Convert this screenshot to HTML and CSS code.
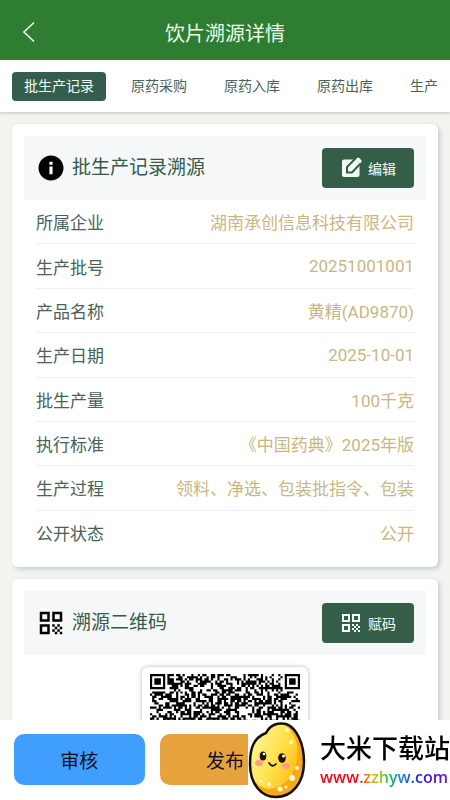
FILE: index.html
```
<!DOCTYPE html>
<html lang="zh-CN">
  <head>
    <meta charset="UTF-8" />
    <meta name="viewport" content="width=device-width, initial-scale=1.0" />

    <title>饮片溯源详情</title>

    <link rel="stylesheet" href="styles.css">
  </head>

  <body>
    <header class="topbar">
      <button class="back" aria-label="返回">
        <svg viewBox="0 0 24 24">
          <path d="M18 2.500L8 12L18 21.500" fill="none" stroke="currentColor" stroke-width="1.700" />
        </svg>
      </button>
      <h1>饮片溯源详情</h1>
    </header>

    <nav class="tabs">
      <div class="tabList">
        <a class="tab active" href="#batch">批生产记录</a>
        <a class="tab" href="#purchase">原药采购</a>
        <a class="tab" href="#in">原药入库</a>
        <a class="tab" href="#out">原药出库</a>
        <a class="tab" href="#produce">生产</a>
      </div>
    </nav>

    <main class="content">
      <section class="card" id="batch">
        <div class="cardHead">
          <svg class="headIcon" viewBox="0 0 24 24">
            <path d="M12 2C6.480 2 2 6.480 2 12s4.480 10 10 10 10-4.480 10-10S17.520 2 12 2zm1.300 15h-2.600v-6.200h2.600v6.200zm0-7.700h-2.600V6.900h2.600v2.400z" />
          </svg>
          <h2>批生产记录溯源</h2>
          <button class="btn">
            <svg viewBox="0 0 24 24">
              <rect x="3" y="3.500" width="17.500" height="17.500" rx="2" />
              <path class="pencil" d="M8 16.500v-5.500L17 2l5 5-9 9.500z" />
              <path d="M16.800 3.300l1.200-1.200q1-1 2.200 0l2 2q1.100 1.100 0 2.200l-1.200 1.200z" />
            </svg>
            编辑
          </button>
        </div>
        <dl class="info">
          <div class="row"><dt>所属企业</dt><dd>湖南承创信息科技有限公司</dd></div>
          <div class="row"><dt>生产批号</dt><dd>20251001001</dd></div>
          <div class="row"><dt>产品名称</dt><dd>黄精(AD9870)</dd></div>
          <div class="row"><dt>生产日期</dt><dd>2025-10-01</dd></div>
          <div class="row"><dt>批生产量</dt><dd>100千克</dd></div>
          <div class="row"><dt>执行标准</dt><dd>《中国药典》2025年版</dd></div>
          <div class="row"><dt>生产过程</dt><dd>领料、净选、包装批指令、包装</dd></div>
          <div class="row"><dt>公开状态</dt><dd>公开</dd></div>
        </dl>
      </section>

      <section class="card">
        <div class="cardHead">
          <svg class="headIcon" viewBox="0 0 24 24">
            <path id="qrIcon" d="M3 11h8V3H3v8zm2-6h4v4H5V5zM3 21h8v-8H3v8zm2-6h4v4H5v-4zM13 3v8h8V3h-8zm6 6h-4V5h4v4zM19 19h2v2h-2zM13 13h2v2h-2zM15 15h2v2h-2zM13 17h2v2h-2zM15 19h2v2h-2zM17 17h2v2h-2zM17 13h2v2h-2zM19 15h2v2h-2z" />
          </svg>
          <h2>溯源二维码</h2>
          <button class="btn">
            <svg viewBox="0 0 24 24"><use href="#qrIcon" /></svg>
            赋码
          </button>
        </div>
        <div class="qrBox">
          <svg class="qr" viewBox="0 0 69 69" role="img" aria-label="溯源二维码">
            <path id="qrPath" />
          </svg>
        </div>
      </section>
    </main>

    <footer class="actions">
      <button class="audit">审核</button>
      <button class="publish">发布</button>
    </footer>

    <div class="brand">
      <svg class="rice" viewBox="0 0 58 78">
        <defs>
          <linearGradient id="riceFill" x1="0" y1="0" x2="1" y2="0.600">
            <stop offset="0" stop-color="#fff8a8" />
            <stop offset="0.550" stop-color="#ffe657" />
            <stop offset="1" stop-color="#ffc51c" />
          </linearGradient>
        </defs>
        <path d="M18 12C22 4 30 1 38 3C49 7 56 23 56 41C56 62 44 76 28 76C13 76 2 63 2 43C2 28 5 17 18 12Z" fill="#f9a916" />
        <path d="M18 12C22 4 30 1 36 3C47 10 51 24 49 38C47 55 36 66 22 68C9 67 2 58 2 43C2 28 5 17 18 12Z" fill="url(#riceFill)" />
        <path d="M18 12C22 4 30 1 38 3C49 7 56 23 56 41C56 62 44 76 28 76C13 76 2 63 2 43C2 28 5 17 18 12Z" fill="none" stroke="#111" stroke-width="2.500" />
        <g fill="#fff8d0">
          <circle cx="39" cy="9" r="2" />
          <circle cx="43" cy="21" r="2" />
          <circle cx="49" cy="47" r="2" />
          <circle cx="44" cy="57" r="3" />
          <circle cx="32" cy="68" r="2.500" />
          <circle cx="21" cy="63" r="2" />
          <circle cx="13" cy="60" r="1.500" />
          <circle cx="38" cy="66" r="1.500" />
        </g>
        <ellipse cx="11" cy="42" rx="4" ry="3" fill="#ff9c8c" />
        <ellipse cx="38" cy="45" rx="4" ry="3" fill="#ff9c8c" />
        <ellipse cx="15" cy="35" rx="3.300" ry="4.500" fill="#201008" />
        <ellipse cx="34" cy="37" rx="3.800" ry="4.800" fill="#201008" />
        <circle cx="16" cy="33" r="1.300" fill="#fff" />
        <circle cx="35.500" cy="35" r="1.500" fill="#fff" />
        <path d="M21 42Q24.500 47 28 43" fill="none" stroke="#201008" stroke-width="1.800" stroke-linecap="round" />
      </svg>
      <div class="brandText">
        <strong>大米下载站</strong>
        <span class="site">www.zzhyw.com</span>
      </div>
    </div>

    <script src="script.js"></script>
  </body>
</html>
```

FILE: styles.css
```
* {
  box-sizing: border-box;
}
body {
  display: flex;
  flex-direction: column;
  height: 100vh;
  margin: 0;
  background-color: #f2f4f0;
  color: #345b47;
  font-family: Roboto, "Noto Sans CJK SC", sans-serif;
}
h1,
h2,
dl,
dd {
  margin: 0;
  font-weight: 400;
}
button {
  border: none;
  padding: 0;
  font-family: inherit;
}

.topbar {
  display: grid;
  flex: none;
  grid-template-columns: 24px 1fr 24px;
  align-items: center;
  height: 60px;
  padding: 4px 16px 0;
  background-color: #2e7d32;
  color: #e9fbe8;
}
.topbar h1 {
  font-size: 20px;
  text-align: center;
}
.back {
  height: 24px;
  background: none;
  color: inherit;
}
.back svg {
  display: block;
  width: 24px;
}

.tabs {
  flex: none;
  padding: 12px 12px 11px;
  background-color: #fff;
  box-shadow: 0 2px 2px rgba(0, 0, 0, 0.12);
}
.tabList {
  display: flex;
  gap: 13px;
  overflow: hidden;
}
.tab {
  flex: none;
  padding: 0 12px;
  border-radius: 4px;
  color: #4a6257;
  font-size: 14px;
  line-height: 29px;
  text-decoration: none;
}
.tab:last-child {
  padding-right: 0;
}
.tab.active {
  background-color: #345e4b;
  color: #f2fff8;
}

.content {
  display: flex;
  flex: 1;
  flex-direction: column;
  gap: 12px;
  min-height: 0;
  padding: 12px;
  overflow-y: auto;
  scrollbar-width: none;
}
.card {
  flex: none;
  padding: 12px;
  border-radius: 6px;
  background-color: #fff;
  box-shadow: 2px 2px 4px rgba(90, 110, 130, 0.3);
}
.cardHead {
  display: flex;
  align-items: center;
  gap: 6px;
  padding: 12px;
  background-color: #f6f7f9;
}
.cardHead h2 {
  flex: 1;
  font-size: 19px;
  line-height: 28px;
}
.headIcon {
  width: 30px;
  height: 30px;
  fill: #000;
}
.btn {
  display: flex;
  align-items: center;
  gap: 5px;
  height: 40px;
  padding: 0 18px 0 17px;
  border-radius: 4px;
  background-color: #345e48;
  color: #f2fff8;
  font-size: 14px;
}
.btn svg {
  width: 24px;
  height: 24px;
  fill: currentColor;
}
.pencil {
  stroke: #345e48;
  stroke-width: 2;
}

.info {
  display: grid;
  grid-auto-rows: 1fr;
  min-height: 355px;
  padding: 0 12px;
}
.row {
  display: flex;
  align-items: center;
  justify-content: space-between;
  border-bottom: 1px solid #eeeff0;
  font-size: 17px;
}
.row:last-child {
  border-bottom: none;
}
.row dt {
  color: #4a6257;
}
.row dd {
  color: #c8b782;
}

.qrBox {
  width: 166px;
  margin: 12px auto 0;
  padding: 7px 8px;
  border-radius: 6px;
  background-color: #fff;
  box-shadow: 0 0 4px rgba(0, 0, 0, 0.3);
}
.qr {
  display: block;
  width: 100%;
}

.actions {
  display: grid;
  flex: none;
  grid-template-columns: repeat(3, 1fr);
  gap: 15px;
  padding: 14px 14px 15px;
  background-color: #fff;
}
.actions button {
  height: 51px;
  border-radius: 10px;
  color: #101020;
  font-size: 19px;
}
.actions .audit {
  background-color: #409eff;
}
.actions .publish {
  background-color: #e6a23c;
}

.brand {
  position: fixed;
  right: 0;
  bottom: 0;
  display: flex;
  align-items: center;
  gap: 14px;
  width: 202px;
  height: 80px;
  background-color: #fff;
}
.rice {
  flex: none;
  width: 58px;
  height: 78px;
}
.brandText {
  display: flex;
  flex-direction: column;
  align-items: flex-start;
  color: #000;
  white-space: nowrap;
}
.brandText strong {
  font-size: 26px;
  font-weight: 500;
  line-height: 34px;
}
.site {
  background: linear-gradient(90deg, #f00818 30%, #f08a10 38%, #a8d020 46%, #20b848 54%, #1880e0 64%, #1828d8 76%, #7010d0);
  background-clip: text;
  color: transparent;
  font-family: "Open Sans", sans-serif;
  font-size: 16px;
  font-weight: 600;
  line-height: 22px;
}
```

FILE: script.js
```
const size = 69;

// finder squares sit in three corners
const finder = (x, y) => {
  const corners = [[3, 3], [size - 4, 3], [3, size - 4]];
  for (const [cx, cy] of corners) {
    const d = Math.max(Math.abs(x - cx), Math.abs(y - cy));
    if (d <= 4) return d !== 2 && d !== 4 ? 1 : 0;
  }
  return -1;
};

let seed = 20251001;
let d = "";

for (let y = 0; y < size; y++) {
  for (let x = 0; x < size; x++) {
    seed = (seed * 1664525 + 1013904223) % 4294967296;
    let on = finder(x, y);
    if (on < 0) on = seed / 4294967296 < 0.56 ? 1 : 0;
    if (on) d += `M${x} ${y}h1v1h-1z`;
  }
}

document.getElementById("qrPath").setAttribute("d", d);
```
